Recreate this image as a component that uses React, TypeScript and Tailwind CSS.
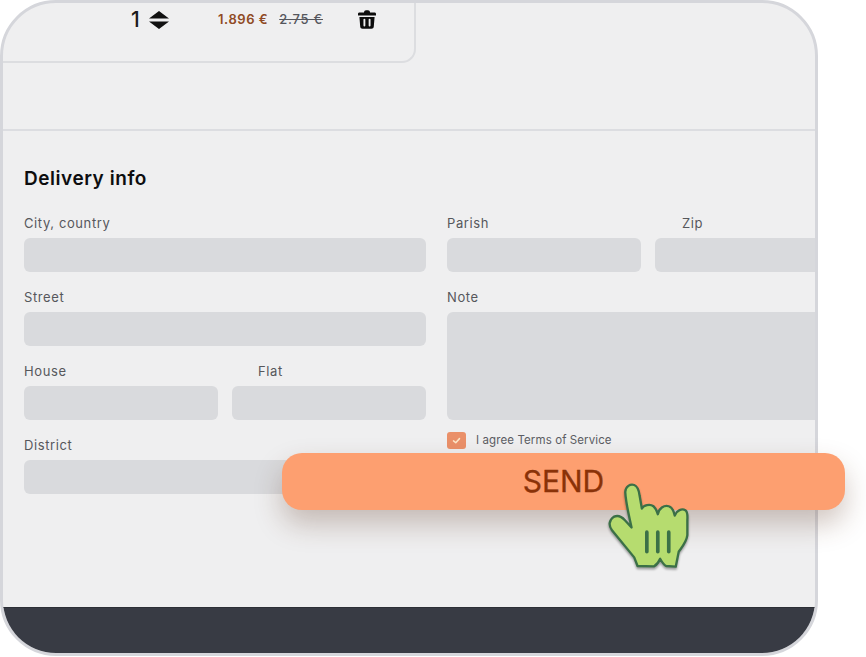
import React from 'react';

function Field({ label, indent, inputClass }: { label: string; indent?: string; inputClass?: string }) {
  return (
    <div className="flex min-w-0 flex-col">
      <label className={`mb-[7px] h-4 text-[13px] leading-4 tracking-[0.6px] text-[#56575c] ${indent ?? ''}`}>{label}</label>
      <div className={`w-full rounded-[6px] bg-[#d9dadd] ${inputClass ?? 'h-[34px]'}`} />
    </div>
  );
}

function HandCursor() {
  return (
    <svg
      viewBox="80 125 250 265"
      className="absolute left-[607px] top-[482px] h-[88px] w-[83px] drop-shadow-[0_2px_1px_rgba(0,0,0,0.35)]"
    >
      <path
        d="M135 155 C136 138 150 130 162 134 C172 138 176 150 178 165 L185 205 C190 194 210 190 220 198 C226 203 230 212 233 222 C236 204 252 194 266 198 C276 201 281 212 284 226 C290 210 306 204 316 210 C323 214 323 224 322 240 L322 285 C320 305 305 322 296 335 L287 380 L258 378 C250 374 245 365 240 356 C236 366 230 374 222 379 L172 378 L162 352 L95 270 C84 256 86 240 100 230 C112 224 125 230 134 240 L154 262 C146 225 137 190 135 155 Z"
        fill="#b6dc6f"
        stroke="#3b7047"
        strokeWidth="7"
        strokeLinejoin="round"
      />
      <path d="M200 276 V335 M233 276 V335 M266 276 V335" stroke="#3b7047" strokeWidth="11" strokeLinecap="round" fill="none" />
    </svg>
  );
}

export default function App() {
  return (
    <div className="relative h-[657px] w-[866px] overflow-hidden bg-white font-['Inter',sans-serif]">
      <div className="flex h-[656px] w-[818px] flex-col overflow-hidden rounded-[56px] border-[3px] border-[#d5d6db] bg-[#efeff0]">
        {/* cart row */}
        <div className="h-[60px] w-[413px] shrink-0 rounded-br-[14px] border-b-2 border-r-2 border-[#dcdde0]">
          <div className="flex h-[33px] items-center pl-[128px]">
            <span className="w-[18px] text-[21px] font-medium leading-none text-[#1b1b1d]">1</span>
            <svg viewBox="0 0 20 18" className="h-[18px] w-[20px]">
              <path d="M10 0 L20 7.5 H0 Z M0 10.5 H20 L10 18 Z" fill="#111" />
            </svg>
            <span className="ml-[49px] text-[13px] font-semibold tracking-[0.55px] text-[#8f4a24]">1.896 €</span>
            <span className="ml-[11px] text-[13px] font-medium tracking-[0.75px] text-[#55565c] line-through">2.75 €</span>
            <svg viewBox="0 0 18 19" className="ml-[35px] h-[19px] w-[18px]">
              <path
                d="M6 2.6 C6 1 7 0.3 8 0.3 H10 C11 0.3 12 1 12 2.6 H16.5 C17.4 2.6 18 3.2 18 4 V5.6 H0 V4 C0 3.2 0.6 2.6 1.5 2.6 Z M1.4 7 H16.6 L15.8 16.6 C15.7 18 14.7 18.8 13.4 18.8 H4.6 C3.3 18.8 2.3 18 2.2 16.6 Z"
                fill="#0c0c0c"
              />
              <path d="M6.4 9.6 V15.6 M11.6 9.6 V15.6" stroke="#efeff0" strokeWidth="1.9" strokeLinecap="round" />
            </svg>
          </div>
        </div>
        <div className="h-[68px] shrink-0 border-b-2 border-[#dcdde1]" />

        {/* delivery form */}
        <div className="flex-1 pl-[21px] pt-[36px]">
          <h2 className="mb-[24px] h-6 text-[19px] font-semibold leading-6 tracking-[0.55px] text-[#0d0d0f]">Delivery info</h2>
          <div className="flex w-[900px] gap-[21px]">
            <div className="flex w-[402px] shrink-0 flex-col gap-[17px]">
              <Field label="City, country" />
              <Field label="Street" />
              <div className="grid grid-cols-2 gap-[14px]">
                <Field label="House" />
                <Field label="Flat" indent="pl-[26px]" />
              </div>
              <Field label="District" />
            </div>
            <div className="flex w-[402px] shrink-0 flex-col gap-[17px]">
              <div className="grid grid-cols-2 gap-[14px]">
                <Field label="Parish" />
                <Field label="Zip" indent="pl-[27px]" />
              </div>
              <Field label="Note" inputClass="h-[108px]" />
              <div className="-mt-[5px] flex items-center gap-[10px]">
                <span className="flex h-[17px] w-[19px] items-center justify-center rounded-[3px] bg-[#ea9069]">
                  <svg viewBox="0 0 12 12" className="h-[9px] w-[9px]">
                    <path d="M2 6.5 L5 9 L10 3.5" fill="none" stroke="#fde6c8" strokeWidth="2" strokeLinecap="round" strokeLinejoin="round" />
                  </svg>
                </span>
                <span className="text-[11.5px] tracking-[0.1px] text-[#5c5d63]">I agree Terms of Service</span>
              </div>
            </div>
          </div>
        </div>

        <div className="h-[46px] shrink-0 border-t border-[#2c2f36] bg-[#383b44]" />
      </div>

      {/* overlay */}
      <button className="absolute left-[282px] top-[453px] flex h-[57px] w-[563px] items-center justify-center rounded-[20px] bg-[#fd9f70] text-[30px] text-[#8a3208] [-webkit-text-stroke:0.3px_#8a3208] shadow-[0_14px_28px_rgba(90,50,30,0.28)]">
        SEND
      </button>
      <HandCursor />
    </div>
  );
}
